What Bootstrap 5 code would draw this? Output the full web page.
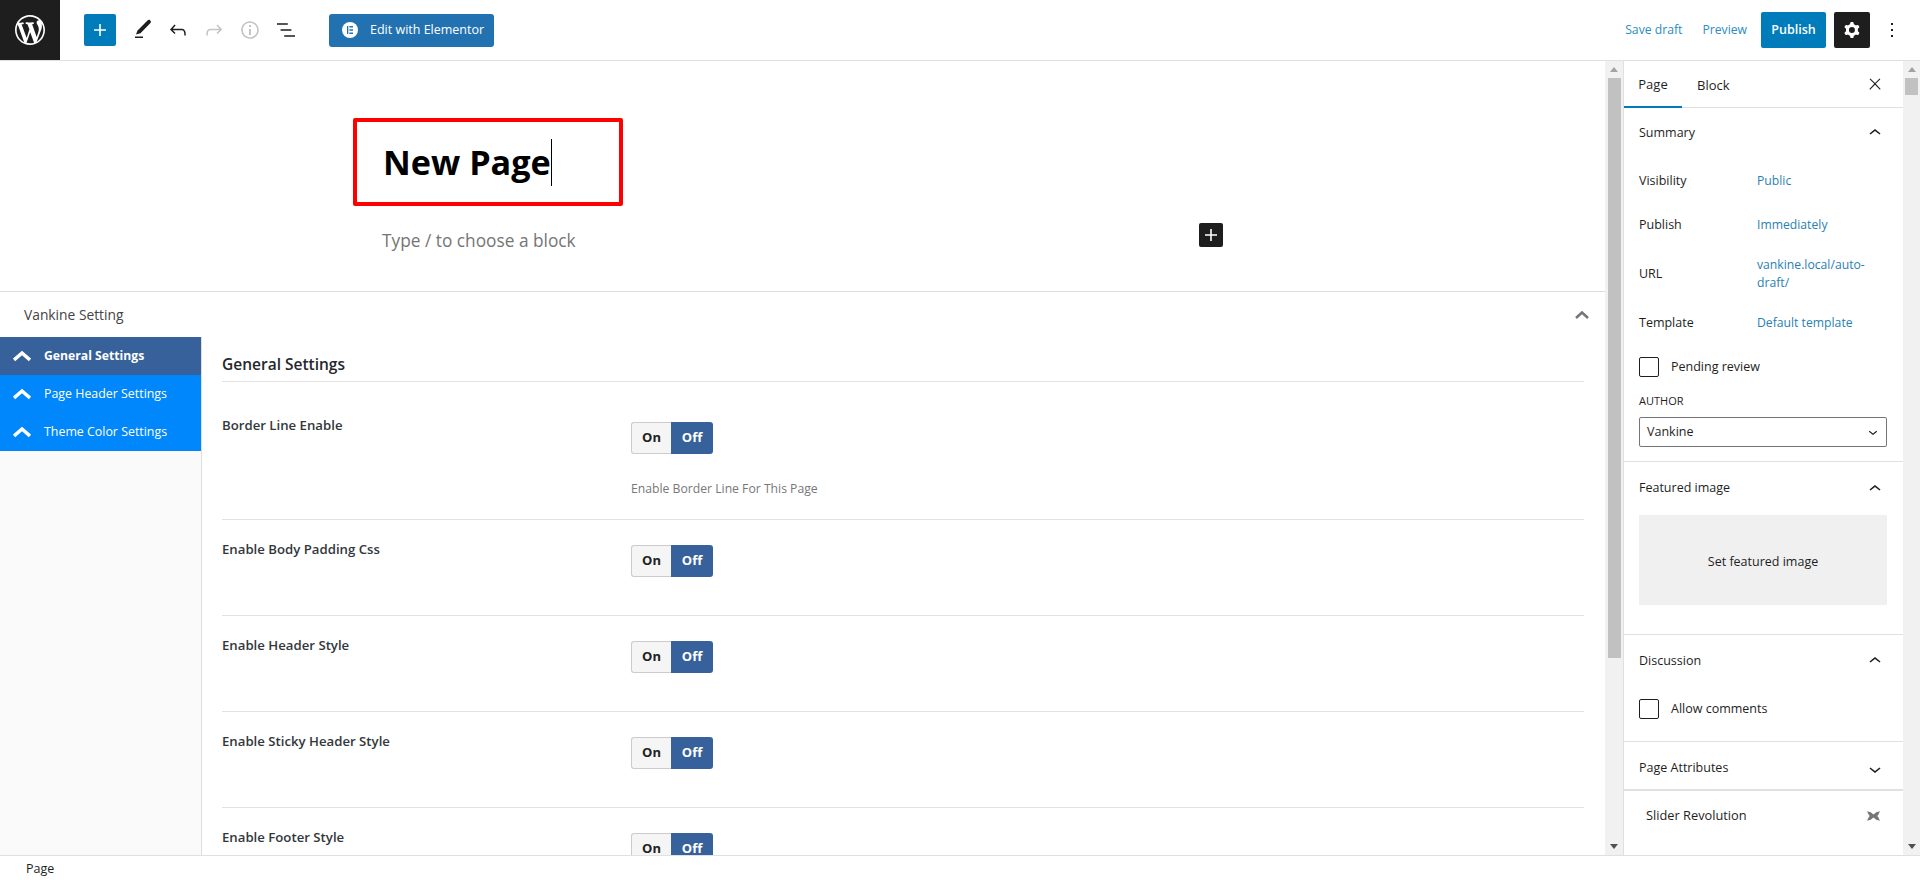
<!DOCTYPE html>
<html lang="en">
<head>
  <meta charset="UTF-8">
  <title>Edit Page</title>
  <link href="https://cdn.jsdelivr.net/npm/bootstrap@5.3.3/dist/css/bootstrap.min.css" rel="stylesheet">
  <style>
    html, body { height: 880px; overflow: hidden; }
    body { font-family: "Open Sans", "Noto Sans", sans-serif; font-size: 12.5px; color: #1e1e1e; background: #fff; }
    svg { display: block; fill: currentColor; }
    .topbar { height: 61px; border-bottom: 1px solid #e0e0e0; }
    .wp-logo { width: 60px; height: 60px; background: #1e1e1e; color: #fff; }
    .tool-add { width: 32px; height: 32px; margin-left: 24px; margin-right: 8px; background: #007cba; color: #fff; border-radius: 2px; }
    .tool-ico { width: 36px; height: 36px; }
    .tool-off { color: #c4c4c4; }
    .elementor-btn { width: 165px; height: 33px; margin-left: 25px; background: #2271b1; color: #fff; border-radius: 3px; font-size: 12.5px; padding-left: 13px; gap: 12px; }
    .elementor-mark { width: 16px; height: 16px; background: #fff; color: #2271b1; border-radius: 50%; }
    .top-link { color: #2a8dc4; font-size: 12.2px; }
    .link-save { margin-right: 20px; }
    .link-preview { margin-right: 14px; }
    .publish-btn { width: 65px; height: 36px; background: #007cba; color: #fff; border-radius: 2px; font-weight: 600; }
    .gear-btn { width: 36px; height: 36px; margin-left: 8px; background: #1e1e1e; color: #fff; border-radius: 2px; }
    .dots-btn { width: 36px; height: 36px; margin-left: 4px; margin-right: 10px; }

    .workspace { height: 794px; overflow: hidden; }
    .editor-pane { width: 1605px; overflow: hidden; }
    .title-zone { height: 231px; border-bottom: 1px solid #ddd; padding: 57px 0 0 353px; }
    .title-box { width: 270px; height: 88px; border: 4px solid #f00; border-radius: 2px; padding: 0 0 0 26px; font-size: 34.2px; font-weight: 700; color: #000; line-height: 1; }
    .title-caret { width: 1px; height: 47px; background: #000; }
    .block-line { width: 841px; margin: 17px 0 0 29px; }
    .block-hint { font-size: 17.3px; line-height: 24px; margin-top: 6px; color: #757575; }
    .block-plus { width: 24px; height: 24px; background: #1e1e1e; color: #fff; border-radius: 2px; }

    .meta-head { height: 45px; padding: 1px 15px 0 24px; color: #444; font-size: 13.8px; }
    .meta-chevron { color: #72777c; }
    .side-tabs { width: 202px; height: 600px; background: #fafafa; border-right: 1px solid #ddd; }
    .side-tab { height: 38px; background: #0087fb; color: #fff; padding-left: 13px; gap: 13px; font-size: 12.4px; }
    .side-tab-on { background: #36619a; font-weight: 700; font-size: 12.2px; }
    .set-pane { padding: 0 21px 0 20px; }
    .set-title { height: 45px; padding-top: 16px; font-size: 15.5px; font-weight: 600; line-height: 22px; border-bottom: 1px solid #e2e2e2; color: #23282d; }
    .set-row { height: 96px; border-bottom: 1px solid #e2e2e2; padding-top: 20px; }
    .set-row-first { height: 138px; padding-top: 34px; }
    .set-label { width: 409px; font-weight: 600; color: #32373c; font-size: 13.2px; line-height: 18px; }
    .toggle-pair { width: 82px; height: 32px; margin-top: 5px; font-weight: 700; font-size: 13px; }
    .set-row-first .toggle-pair { margin-top: 6px; }
    .toggle-on { width: 40px; background: #f5f5f5; border: 1px solid #ccc; border-right: 0; border-radius: 3px 0 0 3px; color: #222; }
    .toggle-off { width: 42px; background: #36619a; color: #fff; border-radius: 0 3px 3px 0; }
    .set-note { margin-top: 26px; color: #777; font-size: 12.2px; line-height: 18px; }

    .vbar { width: 18px; background: #f1f1f1; }
    .vbar-narrow { width: 17px; }
    .vbar-end { height: 17px; }
    .vbar-arrow-up { width: 0; height: 0; border: 4px solid transparent; border-top: 0; border-bottom: 5px solid #a3a3a3; }
    .vbar-arrow-down { width: 0; height: 0; border: 4px solid transparent; border-bottom: 0; border-top: 5px solid #505050; }
    .vbar-thumb { width: 13px; background: #c1c1c1; }
    .thumb-main { height: 580px; }
    .thumb-side { height: 17px; }

    .inspector { width: 280px; border-left: 1px solid #e0e0e0; }
    .insp-tabs { height: 47px; border-bottom: 1px solid #e0e0e0; font-size: 13px; }
    .insp-tab { height: 47px; padding: 3px 16px 0 15px; }
    .insp-tab-on { width: 58px; padding: 3px 0 0; border-bottom: 2px solid #007cba; }
    .insp-close { margin-right: 16px; }
    .insp-sec { border-bottom: 1px solid #e0e0e0; padding: 0 16px 0 15px; }
    .insp-sec-head { height: 50px; font-weight: 500; }
    .head-featured { height: 53px; }
    .head-discussion { padding-top: 2px; }
    .insp-attrs { height: 49px; padding-top: 6px; border-bottom-width: 2px; }
    .insp-row-name { width: 118px; }
    .insp-row-val { color: #2a7fb4; font-size: 12.2px; line-height: 18px; width: 110px; }
    .row-visibility { height: 36px; margin-top: 5px; }
    .row-publish { height: 52px; }
    .row-url { height: 46px; }
    .row-template { height: 52px; }
    .row-pending { margin-top: 8px; }
    .box-check { width: 20px; height: 20px; border: 1px solid #1e1e1e; border-radius: 2px; margin-right: 12px; }
    .author-tag { font-size: 11px; line-height: 14px; margin-top: 17px; }
    .author-pick { height: 30px; margin-top: 9px; margin-bottom: 14px; border: 1px solid #757575; border-radius: 2px; padding: 0 4px 0 7px; }
    .feat-box { height: 90px; margin-bottom: 29px; padding-top: 5px; background: #f0f0f0; }
    .row-comments { margin-top: 14px; margin-bottom: 22px; }
    .slider-head { height: 46px; padding: 4px 23px 0 22px; font-size: 12.8px; }
    .slider-ico { color: #72777c; }

    .statusline { height: 25px; border-top: 1px solid #e0e0e0; padding: 3px 0 0 26px; font-size: 12.5px; }
  </style>
</head>
<body>
  <header class="topbar d-flex align-items-center">
    <div class="wp-logo d-flex align-items-center justify-content-center">
      <svg width="30" height="30" viewBox="0 0 20 20"><path d="M20 10c0-5.510-4.490-10-10-10C4.480 0 0 4.490 0 10c0 5.520 4.480 10 10 10 5.510 0 10-4.480 10-10zM7.780 15.370L4.370 6.220c.55-.02 1.170-.08 1.170-.08.5-.06.44-1.130-.06-1.110 0 0-1.450.11-2.370.11-.18 0-.37 0-.58-.01C4.120 2.690 6.870 1.110 10 1.110c2.330 0 4.450.87 6.050 2.340-.68-.11-1.650.39-1.650 1.580 0 .74.45 1.360.9 2.100.35.61.55 1.360.55 2.460 0 1.490-1.400 5-1.400 5l-3.030-8.370c.54-.02.82-.17.82-.17.5-.05.44-1.250-.06-1.220 0 0-1.440.12-2.380.12-.87 0-2.330-.12-2.330-.12-.5-.03-.56 1.200-.06 1.220l.92.08 1.260 3.410zM17.410 10c.24-.64.74-1.870.43-4.250.7 1.290 1.050 2.710 1.050 4.250 0 3.290-1.730 6.240-4.400 7.780.97-2.590 1.940-5.200 2.920-7.780zM6.100 18.090C3.120 16.650 1.110 13.530 1.110 10c0-1.300.23-2.480.72-3.590C3.250 10.300 4.670 14.200 6.100 18.090zm4.030-6.630l2.580 6.980c-.86.29-1.760.45-2.710.45-.79 0-1.570-.11-2.290-.33.81-2.380 1.620-4.740 2.420-7.100z"/></svg>
    </div>
    <div class="tool-add d-flex align-items-center justify-content-center">
      <svg width="24" height="24" viewBox="0 0 24 24"><path d="M18 11.200h-5.200V6h-1.600v5.200H6v1.600h5.200V18h1.600v-5.200H18z"/></svg>
    </div>
    <div class="tool-ico d-flex align-items-center justify-content-center">
      <svg width="24" height="24" viewBox="0 0 24 24"><path d="M5 18.500h8V20H5zM6 16.500l1.500-4L17.500 2.500c.8-.8 1.600-1 2.300-.4l.8.8c.6.7.4 1.500-.4 2.300L10.500 15.200z"/></svg>
    </div>
    <div class="tool-ico d-flex align-items-center justify-content-center">
      <svg width="24" height="24" viewBox="0 0 24 24"><path d="M18.300 11.700c-.6-.6-1.400-.9-2.300-.9H6.700l2.900-3.300-1.100-1-4.500 5L8.500 16l1-1-2.700-2.700H16c.5 0 .9.2 1.300.5 1 1 1 3.400 1 4.500v.3h1.500v-.2c0-1.500 0-4.300-1.500-5.700z"/></svg>
    </div>
    <div class="tool-ico tool-off d-flex align-items-center justify-content-center">
      <svg width="24" height="24" viewBox="0 0 24 24"><path d="M15.600 6.500l-1.100 1 2.900 3.300H8c-.9 0-1.700.3-2.300.9-1.400 1.500-1.400 4.200-1.400 5.600v.2h1.500v-.3c0-1.100 0-3.500 1-4.500.3-.3.7-.5 1.300-.5h9.200L14.500 15l1.100 1.100 4.600-4.600-4.600-5z"/></svg>
    </div>
    <div class="tool-ico tool-off d-flex align-items-center justify-content-center">
      <svg width="24" height="24" viewBox="0 0 24 24"><path d="M12 3.200c-4.800 0-8.800 3.900-8.800 8.800 0 4.800 3.900 8.800 8.800 8.800 4.800 0 8.800-3.900 8.800-8.800 0-4.800-4-8.800-8.800-8.800zm0 16c-4 0-7.200-3.300-7.200-7.200C4.800 8 8 4.800 12 4.800s7.200 3.300 7.200 7.200c0 4-3.200 7.200-7.200 7.200zM11 17h2v-6h-2v6zm0-8h2V7h-2v2z"/></svg>
    </div>
    <div class="tool-ico d-flex align-items-center justify-content-center">
      <svg width="24" height="24" viewBox="0 0 24 24"><path d="M13.800 5.200H3v1.500h10.800V5.200zm-3.600 12v1.500H21v-1.500H10.200zm7.200-6H6.600v1.500h10.800v-1.500z"/></svg>
    </div>
    <div class="elementor-btn d-flex align-items-center">
      <span class="elementor-mark d-flex align-items-center justify-content-center">
        <svg width="8" height="8" viewBox="0 0 8 8"><path d="M1 0h1.300v8H1zM3.400 0H7v1.400H3.400zM3.400 3.300H7v1.400H3.400zM3.400 6.600H7V8H3.400z"/></svg>
      </span>
      <span>Edit with Elementor</span>
    </div>
    <div class="ms-auto d-flex align-items-center">
      <span class="top-link link-save">Save draft</span>
      <span class="top-link link-preview">Preview</span>
      <div class="publish-btn d-flex align-items-center justify-content-center">Publish</div>
      <div class="gear-btn d-flex align-items-center justify-content-center">
        <svg width="24" height="24" viewBox="0 0 24 24"><path fill-rule="evenodd" d="M10.289 4.836A1 1 0 0111.275 4h1.306a1 1 0 01.987.836l.244 1.466c.787.26 1.503.679 2.108 1.218l1.393-.522a1 1 0 011.216.437l.653 1.130a1 1 0 01-.23 1.273l-1.148.944a6.025 6.025 0 010 2.435l1.149.946a1 1 0 01.23 1.272l-.653 1.130a1 1 0 01-1.216.437l-1.394-.522c-.605.54-1.320.958-2.108 1.218l-.244 1.466a1 1 0 01-.987.836h-1.306a1 1 0 01-.986-.836l-.244-1.466a5.995 5.995 0 01-2.108-1.218l-1.394.522a1 1 0 01-1.217-.436l-.653-1.131a1 1 0 01.23-1.272l1.149-.946a6.026 6.026 0 010-2.435l-1.148-.944a1 1 0 01-.23-1.272l.653-1.131a1 1 0 011.217-.437l1.393.522a5.994 5.994 0 012.108-1.218l.244-1.466zM14.929 12a3 3 0 11-6 0 3 3 0 016 0z"/></svg>
      </div>
      <div class="dots-btn d-flex align-items-center justify-content-center">
        <svg width="24" height="24" viewBox="0 0 24 24"><path d="M13 19h-2v-2h2v2zm0-6h-2v-2h2v2zm0-6h-2V5h2v2z"/></svg>
      </div>
    </div>
  </header>

  <div class="workspace d-flex">
    <main class="editor-pane">
      <section class="title-zone">
        <div class="title-box d-flex align-items-center"><span>New Page</span><span class="title-caret"></span></div>
        <div class="block-line d-flex align-items-start justify-content-between">
          <span class="block-hint">Type / to choose a block</span>
          <span class="block-plus d-flex align-items-center justify-content-center">
            <svg width="24" height="24" viewBox="0 0 24 24"><path d="M18 11.200h-5.200V6h-1.600v5.200H6v1.600h5.200V18h1.600v-5.200H18z"/></svg>
          </span>
        </div>
      </section>

      <div class="meta-head d-flex align-items-center justify-content-between">
        <span>Vankine Setting</span>
        <svg class="meta-chevron" width="16" height="10" viewBox="0 0 16 10"><polyline points="2,8 8,2.500 14,8" fill="none" stroke="currentColor" stroke-width="2.500"/></svg>
      </div>
      <div class="d-flex">
        <nav class="side-tabs flex-shrink-0">
          <div class="side-tab side-tab-on d-flex align-items-center">
            <svg width="18" height="12" viewBox="0 0 18 12"><polyline points="1,10 9,3 17,10" fill="none" stroke="currentColor" stroke-width="3.500"/></svg>
            <span>General Settings</span>
          </div>
          <div class="side-tab d-flex align-items-center">
            <svg width="18" height="12" viewBox="0 0 18 12"><polyline points="1,10 9,3 17,10" fill="none" stroke="currentColor" stroke-width="3.500"/></svg>
            <span>Page Header Settings</span>
          </div>
          <div class="side-tab d-flex align-items-center">
            <svg width="18" height="12" viewBox="0 0 18 12"><polyline points="1,10 9,3 17,10" fill="none" stroke="currentColor" stroke-width="3.500"/></svg>
            <span>Theme Color Settings</span>
          </div>
        </nav>
        <div class="set-pane flex-grow-1">
          <div class="set-title">General Settings</div>
          <div class="set-row set-row-first d-flex">
            <div class="set-label">Border Line Enable</div>
            <div>
              <div class="toggle-pair d-flex"><span class="toggle-on d-flex align-items-center justify-content-center">On</span><span class="toggle-off d-flex align-items-center justify-content-center">Off</span></div>
              <div class="set-note">Enable Border Line For This Page</div>
            </div>
          </div>
          <div class="set-row d-flex">
            <div class="set-label">Enable Body Padding Css</div>
            <div class="toggle-pair d-flex"><span class="toggle-on d-flex align-items-center justify-content-center">On</span><span class="toggle-off d-flex align-items-center justify-content-center">Off</span></div>
          </div>
          <div class="set-row d-flex">
            <div class="set-label">Enable Header Style</div>
            <div class="toggle-pair d-flex"><span class="toggle-on d-flex align-items-center justify-content-center">On</span><span class="toggle-off d-flex align-items-center justify-content-center">Off</span></div>
          </div>
          <div class="set-row d-flex">
            <div class="set-label">Enable Sticky Header Style</div>
            <div class="toggle-pair d-flex"><span class="toggle-on d-flex align-items-center justify-content-center">On</span><span class="toggle-off d-flex align-items-center justify-content-center">Off</span></div>
          </div>
          <div class="set-row d-flex">
            <div class="set-label">Enable Footer Style</div>
            <div class="toggle-pair d-flex"><span class="toggle-on d-flex align-items-center justify-content-center">On</span><span class="toggle-off d-flex align-items-center justify-content-center">Off</span></div>
          </div>
        </div>
      </div>
    </main>

    <div class="vbar d-flex flex-column align-items-center flex-shrink-0">
      <div class="vbar-end d-flex align-items-center"><span class="vbar-arrow-up"></span></div>
      <div class="vbar-thumb thumb-main"></div>
      <div class="vbar-end d-flex align-items-center mt-auto"><span class="vbar-arrow-down"></span></div>
    </div>

    <aside class="inspector flex-grow-1">
      <div class="insp-tabs d-flex align-items-center">
        <div class="insp-tab insp-tab-on d-flex align-items-center justify-content-center">Page</div>
        <div class="insp-tab d-flex align-items-center">Block</div>
        <svg class="ms-auto insp-close" width="24" height="24" viewBox="0 0 24 24"><path d="M13 11.800l6.100-6.300-1-1-6.100 6.200-6.100-6.200-1 1 6.100 6.300-6.500 6.700 1 1 6.500-6.600 6.500 6.600 1-1z" transform="translate(3 3) scale(.75)"/></svg>
      </div>

      <section class="insp-sec">
        <div class="insp-sec-head d-flex align-items-center justify-content-between">
          <span>Summary</span>
          <svg class="me-n1" width="24" height="24" viewBox="0 0 24 24"><path d="M6.500 12.400L12 8l5.500 4.400-.9 1.200L12 10l-4.500 3.600-1-1.200z"/></svg>
        </div>
        <div class="row-visibility d-flex align-items-center"><span class="insp-row-name">Visibility</span><span class="insp-row-val">Public</span></div>
        <div class="row-publish d-flex align-items-center"><span class="insp-row-name">Publish</span><span class="insp-row-val">Immediately</span></div>
        <div class="row-url d-flex align-items-center"><span class="insp-row-name">URL</span><span class="insp-row-val">vankine.local/auto-draft/</span></div>
        <div class="row-template d-flex align-items-center"><span class="insp-row-name">Template</span><span class="insp-row-val">Default template</span></div>
        <div class="row-pending d-flex align-items-center"><span class="box-check"></span><span>Pending review</span></div>
        <div class="author-tag">AUTHOR</div>
        <div class="author-pick d-flex align-items-center justify-content-between">
          <span>Vankine</span>
          <svg width="18" height="18" viewBox="0 0 24 24"><path d="M17.500 11.600L12 16l-5.500-4.400.9-1.200L12 14l4.500-3.600 1 1.200z"/></svg>
        </div>
      </section>

      <section class="insp-sec">
        <div class="insp-sec-head head-featured d-flex align-items-center justify-content-between">
          <span>Featured image</span>
          <svg class="me-n1" width="24" height="24" viewBox="0 0 24 24"><path d="M6.500 12.400L12 8l5.500 4.400-.9 1.200L12 10l-4.500 3.600-1-1.200z"/></svg>
        </div>
        <div class="feat-box d-flex align-items-center justify-content-center">Set featured image</div>
      </section>

      <section class="insp-sec">
        <div class="insp-sec-head head-discussion d-flex align-items-center justify-content-between">
          <span>Discussion</span>
          <svg class="me-n1" width="24" height="24" viewBox="0 0 24 24"><path d="M6.500 12.400L12 8l5.500 4.400-.9 1.200L12 10l-4.500 3.600-1-1.200z"/></svg>
        </div>
        <div class="row-comments d-flex align-items-center"><span class="box-check"></span><span>Allow comments</span></div>
      </section>

      <section class="insp-sec insp-sec-head insp-attrs d-flex align-items-center justify-content-between">
        <span>Page Attributes</span>
        <svg class="me-n1" width="24" height="24" viewBox="0 0 24 24"><path d="M17.500 11.600L12 16l-5.500-4.400.9-1.200L12 14l4.500-3.600 1 1.200z"/></svg>
      </section>

      <section class="slider-head d-flex align-items-center justify-content-between">
        <span>Slider Revolution</span>
        <svg class="slider-ico" width="13" height="10" viewBox="0 0 14 10"><path d="M0 0l4 1 3 2.500L10 1l4-1-2 4-1 1 1 1 2 4-4-1-3-2.500L4 9l-4 1 2-4 1-1-1-1z"/></svg>
      </section>
    </aside>

    <div class="vbar vbar-narrow d-flex flex-column align-items-center flex-shrink-0">
      <div class="vbar-end d-flex align-items-center"><span class="vbar-arrow-up"></span></div>
      <div class="vbar-thumb thumb-side"></div>
      <div class="vbar-end d-flex align-items-center mt-auto"><span class="vbar-arrow-down"></span></div>
    </div>
  </div>

  <footer class="statusline d-flex align-items-center">Page</footer>

  <script src="https://cdn.jsdelivr.net/npm/bootstrap@5.3.3/dist/js/bootstrap.bundle.min.js"></script>
</body>
</html>
